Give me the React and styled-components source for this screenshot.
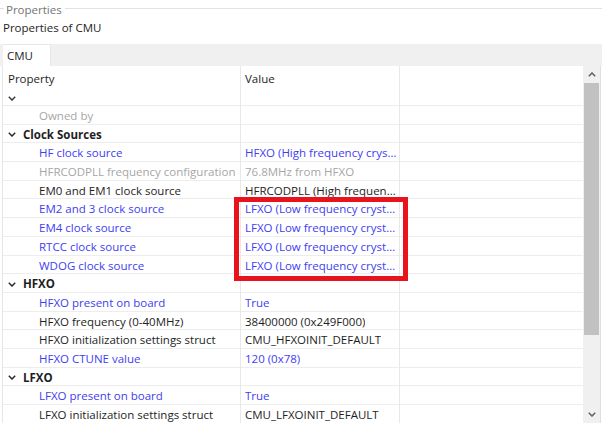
import styled, { createGlobalStyle } from 'styled-components';

const GlobalStyle = createGlobalStyle`
  html, body {
    margin: 0;
    padding: 0;
    background: #ffffff;
  }

  body {
    font-family: 'Open Sans', 'Noto Sans', sans-serif;
    font-size: 11.5px;
    color: #1e1e1e;
  }

  #root {
    height: 423px;
  }
`;

const Page = styled.div`
  height: 423px;
  display: flex;
  flex-direction: column;
  overflow: hidden;
`;

const Legend = styled.div`
  display: flex;
  align-items: center;
  height: 18px;
  padding-top: 1px;
  box-sizing: border-box;
  color: #747474;

  &::before,
  &::after {
    content: '';
    height: 1px;
    align-self: flex-start;
    margin-top: 7px;
    background: #e2e2e2;
  }

  &::before {
    width: 4px;
    margin-right: 2px;
  }

  &::after {
    flex: 1;
    margin-left: 3px;
  }
`;

const Subtitle = styled.div`
  height: 19px;
  line-height: 20px;
  padding-left: 3px;
  color: #1e1e1e;
`;

const TabBar = styled.div`
  margin-top: 7px;
  height: 22px;
  background: #f0f0f0;
  display: flex;
  padding-left: 3px;
`;

const Tab = styled.div`
  width: 48px;
  box-sizing: border-box;
  padding-left: 4px;
  line-height: 22px;
  background: #ffffff;
  border-top: 1px solid #e6e6e6;
  border-right: 1px solid #e6e6e6;
`;

const TableArea = styled.div`
  flex: 1;
  display: flex;
  margin-left: 2px;
  margin-right: 1px;
  border-left: 1px solid #e6e6e6;
  border-right: 1px solid #dedede;
  overflow: hidden;
`;

const Table = styled.div`
  position: relative;
  flex: 1;
  overflow: hidden;
`;

const HeaderBlock = styled.div`
  display: grid;
  grid-template-columns: 238px 159px 1fr;
  height: 40px;
  box-sizing: border-box;
  border-bottom: 1px solid #ededed;
`;

const HeaderCell = styled.div`
  display: flex;
  flex-direction: column;
  padding: 4px 0 0 ${(p) => p.$pad}px;
  border-right: ${(p) => (p.$last ? 'none' : '1px solid #e8e8e8')};
  color: #1e1e1e;

  span {
    line-height: 18px;
  }
`;

const Row = styled.div`
  display: grid;
  grid-template-columns: 238px 159px 1fr;
  height: 18.7px;
  box-sizing: border-box;
  border-bottom: 1px solid #ededed;
  line-height: 17.7px;
`;

const toneColor = {
  link: '#4040f2',
  muted: '#a6a6a6',
  plain: '#1e1e1e',
};

const Cell = styled.div`
  display: flex;
  align-items: center;
  gap: 7px;
  min-width: 0;
  padding-top: 1px;
  padding-left: ${(p) => p.$pad}px;
  padding-right: 2px;
  border-right: ${(p) => (p.$last ? 'none' : '1px solid #e8e8e8')};
  color: ${(p) => toneColor[p.$tone] || '#1e1e1e'};
  font-weight: ${(p) => (p.$bold ? 700 : 400)};
  white-space: nowrap;
  overflow: ${(p) => (p.$clip ? 'hidden' : 'visible')};

  span {
    flex-shrink: ${(p) => (p.$clip ? 1 : 0)};
    overflow: ${(p) => (p.$clip ? 'hidden' : 'visible')};
    text-overflow: ellipsis;
  }
`;

const Highlight = styled.div`
  position: absolute;
  left: 231px;
  top: 131px;
  width: 174px;
  height: 84px;
  box-sizing: border-box;
  border: 5px solid #e8141d;
  pointer-events: none;
`;

const Scrollbar = styled.div`
  width: 17px;
  background: #f0f0f0;
  display: flex;
  flex-direction: column;
`;

const ScrollButton = styled.div`
  height: 17px;
  flex-shrink: 0;
  display: flex;
  align-items: center;
  justify-content: center;
`;

const Thumb = styled.div`
  height: 252px;
  margin: 0 1px;
  background: #c1c1c1;
`;

const Track = styled.div`
  flex: 1;
`;

function Chevron({ up, color = '#3a3a3a' }) {
  return (
    <svg width="8" height="5" viewBox="0 0 8 5">
      <polyline
        points={up ? '0.8,4.2 4,1 7.2,4.2' : '0.8,0.8 4,4 7.2,0.8'}
        fill="none"
        stroke={color}
        strokeWidth="1.5"
      />
    </svg>
  );
}

const rows = [
  { label: 'Owned by', value: '', tone: 'muted' },
  { group: true, label: 'Clock Sources' },
  { label: 'HF clock source', value: 'HFXO (High frequency crystal oscillator)', tone: 'link' },
  { label: 'HFRCODPLL frequency configuration', value: '76.8MHz from HFXO', tone: 'muted' },
  { label: 'EM0 and EM1 clock source', value: 'HFRCODPLL (High frequency RC oscillator DPLL)', tone: 'plain' },
  { label: 'EM2 and 3 clock source', value: 'LFXO (Low frequency crystal oscillator)', tone: 'link' },
  { label: 'EM4 clock source', value: 'LFXO (Low frequency crystal oscillator)', tone: 'link' },
  { label: 'RTCC clock source', value: 'LFXO (Low frequency crystal oscillator)', tone: 'link' },
  { label: 'WDOG clock source', value: 'LFXO (Low frequency crystal oscillator)', tone: 'link' },
  { group: true, label: 'HFXO' },
  { label: 'HFXO present on board', value: 'True', tone: 'link' },
  { label: 'HFXO frequency (0-40MHz)', value: '38400000 (0x249F000)', tone: 'plain' },
  { label: 'HFXO initialization settings struct', value: 'CMU_HFXOINIT_DEFAULT', tone: 'plain' },
  { label: 'HFXO CTUNE value', value: '120 (0x78)', tone: 'link' },
  { group: true, label: 'LFXO' },
  { label: 'LFXO present on board', value: 'True', tone: 'link' },
  { label: 'LFXO initialization settings struct', value: 'CMU_LFXOINIT_DEFAULT', tone: 'plain' },
];

function App() {
  return (
    <Page>
      <GlobalStyle />
      <Legend>Properties</Legend>
      <Subtitle>Properties of CMU</Subtitle>
      <TabBar>
        <Tab>CMU</Tab>
      </TabBar>
      <TableArea>
        <Table>
          <HeaderBlock>
            <HeaderCell $pad={5}>
              <span>Property</span>
              <span>
                <Chevron />
              </span>
            </HeaderCell>
            <HeaderCell $pad={4}>
              <span>Value</span>
            </HeaderCell>
            <HeaderCell $last />
          </HeaderBlock>
          {rows.map((row) =>
            row.group ? (
              <Row key={row.label}>
                <Cell $pad={5} $bold>
                  <Chevron color="#2a2a2a" />
                  <span>{row.label}</span>
                </Cell>
                <Cell />
                <Cell $last />
              </Row>
            ) : (
              <Row key={row.label}>
                <Cell $pad={36} $tone={row.tone}>
                  <span>{row.label}</span>
                </Cell>
                <Cell $pad={4} $tone={row.tone} $clip>
                  <span>{row.value}</span>
                </Cell>
                <Cell $last />
              </Row>
            )
          )}
          <Highlight />
        </Table>
        <Scrollbar>
          <ScrollButton>
            <Chevron up color="#606060" />
          </ScrollButton>
          <Thumb />
          <Track />
          <ScrollButton>
            <Chevron color="#606060" />
          </ScrollButton>
        </Scrollbar>
      </TableArea>
    </Page>
  );
}

export default App;
